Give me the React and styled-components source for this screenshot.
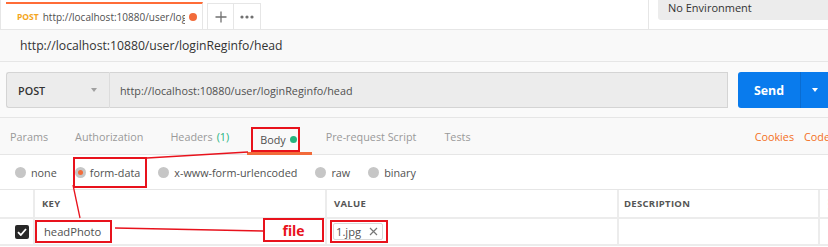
import { createGlobalStyle, styled, css } from "styled-components";

const RED = "#e8121c";
const ORANGE = "#f26b3a";
const LINE = "#e6e6e6";

const GlobalStyle = createGlobalStyle`
  body {
    margin: 0;
    background: #fff;
    font-family: "Open Sans", "Liberation Sans", sans-serif;
    color: #505050;
  }
`;

const marked = css`
  outline: 2px solid ${RED};
  outline-offset: -2px;
`;

const Page = styled.div`
  position: relative;
  width: 828px;
  height: 247px;
  overflow: hidden;
  background: #fff;
`;

/* ---- top tab strip ---- */
const TabStrip = styled.div`
  display: flex;
  align-items: flex-end;
  height: 29px;
  border-left: 1px solid ${LINE};
`;

const OpenTab = styled.div`
  box-sizing: border-box;
  display: flex;
  align-items: center;
  gap: 4px;
  flex-shrink: 0;
  margin-left: 5px;
  width: 197px;
  height: 27px;
  padding: 0 5px 0 11px;
  border-top: 2px solid #ff6c37;
  border-right: 1px solid ${LINE};
  background: #fff;
`;

const TabMethod = styled.span`
  font-size: 8.5px;
  font-weight: 700;
  color: #f4a520;
`;

const TabUrl = styled.span`
  flex: 1;
  overflow: hidden;
  white-space: nowrap;
  font-size: 10px;
  color: #505050;
`;

const Dot = styled.span`
  width: ${(p) => p.$size || 8}px;
  height: ${(p) => p.$size || 8}px;
  border-radius: 50%;
  background: ${(p) => p.$color};
  flex-shrink: 0;
`;

const IconTab = styled.div`
  box-sizing: border-box;
  display: flex;
  align-items: center;
  justify-content: center;
  flex-shrink: 0;
  width: 27px;
  height: 26px;
  margin-left: ${(p) => (p.$first ? "4px" : "0")};
  border: 1px solid ${LINE};
  border-left: ${(p) => (p.$first ? `1px solid ${LINE}` : "none")};
  border-bottom: none;
  color: #707070;
`;

const StripSpacer = styled.div`
  flex: 1;
`;

const EnvArea = styled.div`
  display: flex;
  flex-shrink: 0;
  align-self: stretch;
  border-left: 1px solid ${LINE};
  padding-left: 9px;
`;

const EnvSelect = styled.div`
  box-sizing: border-box;
  width: 170px;
  height: 20px;
  padding: 0 0 0 10px;
  background: #ececec;
  border-bottom-left-radius: 3px;
  font-size: 11px;
  line-height: 15px;
  color: #333;
`;

/* ---- title bar ---- */
const TitleBar = styled.div`
  display: flex;
  align-items: center;
  height: 31px;
  padding-left: 20px;
  background: #f9f9f9;
  border-top: 1px solid ${LINE};
  border-bottom: 1px solid ${LINE};
  font-size: 12.2px;
  color: #333;
`;

/* ---- request bar ---- */
const RequestBar = styled.div`
  display: flex;
  padding: 10px 0 9px 6px;
  background: #fafafa;
  border-bottom: 1px solid ${LINE};
  overflow: hidden;
  & > * {
    flex-shrink: 0;
  }
`;

const MethodSelect = styled.div`
  box-sizing: border-box;
  display: flex;
  align-items: center;
  justify-content: space-between;
  width: 104px;
  height: 36px;
  padding: 0 12px 0 11px;
  background: #ececec;
  border: 1px solid #d4d4d4;
  border-right: 1px solid #dcdcdc;
  border-radius: 3px 0 0 3px;
  font-size: 10.8px;
  font-weight: 600;
  color: #333;
`;

const Caret = styled.span`
  width: 0;
  height: 0;
  border-left: 3px solid transparent;
  border-right: 3px solid transparent;
  border-top: 4px solid ${(p) => p.$color || "#a0a0a0"};
`;

const UrlInput = styled.div`
  box-sizing: border-box;
  display: flex;
  align-items: center;
  width: 618px;
  height: 36px;
  padding-left: 10px;
  background: #ececec;
  border: 1px solid #d4d4d4;
  border-left: none;
  font-size: 10.8px;
  color: #505050;
`;

const SendGroup = styled.div`
  display: flex;
  margin-left: 10px;
  width: 100px;
  height: 36px;
  border-radius: 3px;
  background: #097bed;
  color: #fff;
`;

const SendLabel = styled.div`
  display: flex;
  align-items: center;
  justify-content: center;
  width: 62px;
  border-right: 1px solid #0a6cd0;
  font-size: 12.4px;
  font-weight: 700;
`;

const SendMore = styled.div`
  display: flex;
  align-items: center;
  padding-left: 11px;
`;

/* ---- request tabs ---- */
const ReqTabs = styled.div`
  display: flex;
  align-items: stretch;
  height: 36px;
  margin-left: -4px;
  background: #f9f9f9;
  border-bottom: 1px solid ${LINE};
  font-size: 10.8px;
  color: #9a9a9a;
`;

const ReqTab = styled.div`
  position: relative;
  display: flex;
  align-items: center;
  padding: ${(p) => p.$pad || "0 14px"};
  color: ${(p) => (p.$active ? "#505050" : "#9a9a9a")};
  ${(p) =>
    p.$active &&
    css`
      margin-left: 4px;
      padding: 0 15px 0 13px;
      &::after {
        content: "";
        position: absolute;
        left: 0;
        right: 0;
        bottom: -1px;
        height: 3px;
        background: ${ORANGE};
      }
    `}
`;

const Count = styled.span`
  margin-left: 4px;
  color: #26b47f;
`;

const BodyMark = styled.span`
  display: inline-flex;
  align-items: center;
  gap: 4px;
  margin: 7px -3px 0 -9px;
  padding: 5px 3px 5px 9px;
  ${marked}
`;

const ReqLinks = styled.div`
  display: flex;
  align-items: center;
  gap: 10px;
  margin-left: auto;
  margin-right: -2px;
  color: #f47023;
`;

/* ---- body type options ---- */
const BodyTypes = styled.div`
  display: flex;
  align-items: center;
  gap: 18px;
  height: 34px;
  padding-left: 15px;
  border-bottom: 1px solid ${LINE};
  font-size: 10.8px;
  color: #505050;
`;

const BodyType = styled.label`
  display: flex;
  align-items: center;
  gap: 5px;
  ${(p) =>
    p.$marked &&
    css`
      gap: 4px;
      margin: 0 -7px 0 -2px;
      padding: 8px 7px 8px 2px;
      ${marked}
    `}
`;

const Radio = styled.span`
  box-sizing: border-box;
  display: flex;
  align-items: center;
  justify-content: center;
  width: 11px;
  height: 11px;
  border-radius: 50%;
  background: #c6c6c6;
  &::after {
    content: "";
    display: ${(p) => (p.$checked ? "block" : "none")};
    width: 5px;
    height: 5px;
    border-radius: 50%;
    background: ${ORANGE};
  }
`;

/* ---- params table ---- */
const Table = styled.div`
  display: grid;
  grid-template-columns: 33px 292px 292px 201px 1fr;
  grid-auto-rows: 27px;
  border-bottom: 2px solid #ececec;
`;

const Cell = styled.div`
  display: flex;
  align-items: center;
  padding-left: ${(p) => p.$pad ?? 7}px;
  border-left: ${(p) => (p.$first ? "none" : "2px solid #ececec")};
  border-top: ${(p) => (p.$row ? "2px solid #ececec" : "none")};
  font-size: ${(p) => (p.$head ? "9.5px" : "11.2px")};
  font-weight: ${(p) => (p.$head ? 700 : 400)};
  letter-spacing: ${(p) => (p.$head ? "0.3px" : "0")};
  color: ${(p) => (p.$head ? "#555" : "#505050")};
`;

const Check = styled.span`
  display: flex;
  align-items: center;
  justify-content: center;
  width: 14px;
  height: 14px;
  border-radius: 2px;
  background: #282828;
`;

const KeyText = styled.span`
  margin-left: -9px;
  padding: 4px 11px 4px 9px;
  ${marked}
`;

const FileMark = styled.span`
  margin-left: -3px;
  padding: 3px 5px 3px 3px;
  ${marked}
`;

const FileChip = styled.span`
  display: inline-flex;
  align-items: center;
  gap: 8px;
  padding: 0 4px 0 2px;
  border: 1px solid #d8d8d8;
  border-radius: 2px;
  line-height: 15px;
  color: #505050;
`;

const MenuDots = styled.span`
  font-size: 12px;
  color: #888;
  line-height: 1;
`;

/* ---- annotations over the page ---- */
const Callouts = styled.svg`
  position: absolute;
  inset: 0;
  pointer-events: none;
`;

const FileLabel = styled.div`
  position: absolute;
  left: 263px;
  top: 218px;
  box-sizing: border-box;
  display: flex;
  align-items: center;
  justify-content: center;
  width: 61px;
  height: 24px;
  background: #fff;
  ${marked}
  font-size: 14px;
  font-weight: 700;
  color: ${RED};
`;

const PlusIcon = () => (
  <svg width="12" height="12" viewBox="0 0 12 12">
    <path d="M6 0.5 V11.5 M0.5 6 H11.5" stroke="#707070" strokeWidth="1.3" />
  </svg>
);

const DotsIcon = () => (
  <svg width="14" height="4" viewBox="0 0 14 4">
    <circle cx="2" cy="2" r="1.6" fill="#707070" />
    <circle cx="7" cy="2" r="1.6" fill="#707070" />
    <circle cx="12" cy="2" r="1.6" fill="#707070" />
  </svg>
);

const CheckIcon = () => (
  <svg width="10" height="8" viewBox="0 0 10 8">
    <path d="M1 4.2 L3.8 7 L9 1" fill="none" stroke="#fff" strokeWidth="1.8" />
  </svg>
);

const CloseIcon = () => (
  <svg width="9" height="9" viewBox="0 0 9 9">
    <path d="M1 1 L8 8 M8 1 L1 8" stroke="#777" strokeWidth="1.2" />
  </svg>
);

const bodyTypes = [
  { label: "none" },
  { label: "form-data", checked: true },
  { label: "x-www-form-urlencoded" },
  { label: "raw" },
  { label: "binary" },
];

const url = "http://localhost:10880/user/loginReginfo/head";

export default function App() {
  return (
    <Page>
      <GlobalStyle />
      <TabStrip>
        <OpenTab>
          <TabMethod>POST</TabMethod>
          <TabUrl>http://localhost:10880/user/logi</TabUrl>
          <Dot $color={ORANGE} />
        </OpenTab>
        <IconTab $first>
          <PlusIcon />
        </IconTab>
        <IconTab>
          <DotsIcon />
        </IconTab>
        <StripSpacer />
        <EnvArea>
          <EnvSelect>No Environment</EnvSelect>
        </EnvArea>
      </TabStrip>

      <TitleBar>{url}</TitleBar>

      <RequestBar>
        <MethodSelect>
          POST
          <Caret />
        </MethodSelect>
        <UrlInput>{url}</UrlInput>
        <SendGroup>
          <SendLabel>Send</SendLabel>
          <SendMore>
            <Caret $color="#fff" />
          </SendMore>
        </SendGroup>
      </RequestBar>

      <ReqTabs>
        <ReqTab $pad="0 13px 0 14px">Params</ReqTab>
        <ReqTab $pad="0 13px 0 14px">Authorization</ReqTab>
        <ReqTab>
          Headers<Count>(1)</Count>
        </ReqTab>
        <ReqTab $active>
          <BodyMark>
            Body
            <Dot $color="#26b47f" $size={7} />
          </BodyMark>
        </ReqTab>
        <ReqTab>Pre-request Script</ReqTab>
        <ReqTab>Tests</ReqTab>
        <ReqLinks>
          <span>Cookies</span>
          <span>Code</span>
        </ReqLinks>
      </ReqTabs>

      <BodyTypes>
        {bodyTypes.map((t) => (
          <BodyType key={t.label} $marked={t.checked}>
            <Radio $checked={t.checked} />
            {t.label}
          </BodyType>
        ))}
      </BodyTypes>

      <Table>
        <Cell $first />
        <Cell $head>KEY</Cell>
        <Cell $head>VALUE</Cell>
        <Cell $head $pad={5}>DESCRIPTION</Cell>
        <Cell $pad={3}>
          <MenuDots>⋮</MenuDots>
        </Cell>

        <Cell $first $row $pad={15}>
          <Check>
            <CheckIcon />
          </Check>
        </Cell>
        <Cell $row $pad={9}>
          <KeyText>headPhoto</KeyText>
        </Cell>
        <Cell $row $pad={6}>
          <FileMark>
            <FileChip>
              1.jpg
              <CloseIcon />
            </FileChip>
          </FileMark>
        </Cell>
        <Cell $row />
        <Cell $row />
      </Table>

      <Callouts width="828" height="247">
        <g stroke={RED} strokeWidth="1.3">
          <line x1="248" y1="152" x2="147" y2="158" />
          <line x1="73" y1="185" x2="80" y2="218" />
          <line x1="115" y1="228" x2="263" y2="231" />
        </g>
      </Callouts>
      <FileLabel>file</FileLabel>
    </Page>
  );
}
